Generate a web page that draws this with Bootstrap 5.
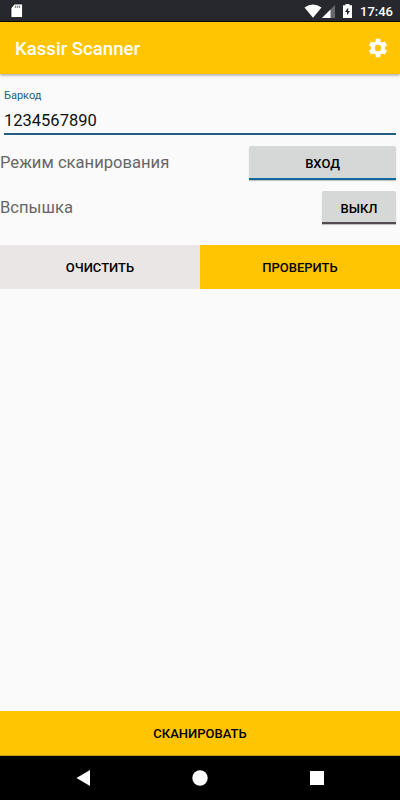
<!DOCTYPE html>
<html lang="ru">
<head>
<meta charset="utf-8">
<meta name="viewport" content="width=device-width, initial-scale=1">
<title>Kassir Scanner</title>
<link href="https://cdn.jsdelivr.net/npm/bootstrap@5.3.0/dist/css/bootstrap.min.css" rel="stylesheet">
<style>
body { font-family: Roboto, "Noto Sans", sans-serif; background: #fafafa; color: #111; line-height: 1; }
svg { display: block; flex: none; }
.screen { height: 800px; width: 400px; }
.status-bar { height: 22px; background: #27282e; border-bottom: 1px solid #08080c; padding: 1px 7px 0 9px; font-size: 13px; font-weight: 500; }
.app-bar { height: 52px; background: #ffc503; padding: 0 11px 0 15px; box-shadow: 0 1px 3px rgba(0,0,0,.4); }
.app-title { font-size: 18.6px; font-weight: 500; padding-top: 2px; }
.field-box { margin: 16px 4px 0; height: 44px; border-bottom: 2px solid #236080; }
.field-box label { font-size: 11px; color: #236080; line-height: 12px; display: block; }
.field-box input { font-size: 16.5px; line-height: 20px; color: #111; height: 20px; margin-top: 9px; }
.field-box input:focus { outline: 0; }
.option-row { height: 44.5px; padding-right: 4px; font-size: 16.6px; color: #666; }
.options { margin-top: 7px; }
.btn { --bs-btn-font-size: 13px; --bs-btn-font-weight: 500; --bs-btn-line-height: 1; --bs-btn-color: #000; --bs-btn-hover-color: #000; }
.btn-toggle { height: 33.5px; background: #d6d8d7; border: 0; border-bottom: 2px solid #514a50; border-radius: 2px 2px 0 0; box-shadow: 0 1px 1px rgba(0,0,0,.25); padding: 3px 0 0; }
.btn-mode { width: 147px; border-bottom-color: #116a9a; }
.btn-flash { width: 74px; }
.btn-flat { height: 44px; border: 0; }
.btn-clear { background: #eae6e5; }
.btn-main { background: #ffc503; }
.field-box { height: 45px; }
.options { margin-top: 5.75px; }
.actions { margin-top: 15.25px; }
.option-row span { padding-top: 1px; }
.btn-scan { height: 45px; border-bottom: 1px solid #c39b16; }
.nav-keys { height: 44px; background: #000; padding: 0 76px; }
</style>
<script defer src="https://cdn.jsdelivr.net/npm/bootstrap@5.3.0/dist/js/bootstrap.bundle.min.js"></script>
</head>
<body>
<div class="screen d-flex flex-column overflow-hidden">
  <div class="status-bar d-flex align-items-center text-white">
    <svg width="14" height="16" viewBox="0 0 14 16" class="me-auto"><path d="M5.500 1H12.500Q13.500 1 13.500 2V13.500q0 1-1 1H3Q2 14.500 2 13.500V5Z" fill="#fff" stroke="#08080c" stroke-width=".7"/><path d="M6.500 2.500v2.500M8.500 2.500v2.500M10.500 2.500v2.500" stroke="#888" stroke-width="1.300"/></svg>
    <svg width="18" height="14" viewBox="0 0 18 14"><path d="M.5 3.500Q9-2.700 17.500 3.500L9 13.800Z" fill="#fff"/></svg>
    <svg width="13" height="13" viewBox="0 0 13 13" class="me-1"><path d="M0 13 13 0V13Z" fill="#68696d"/><path d="M0 13 8.500 4.500V13Z" fill="#fff"/></svg>
    <svg width="9" height="14" viewBox="0 0 9 14" class="ms-1"><path d="M2.500 0h4v1.300H9V14H0V1.300h2.500Z" fill="#fff"/><path d="M5.200 3.500 2 8.100h2v3.200L7 6.900H5.200Z" fill="#27282e"/></svg>
    <span class="ms-2">17:46</span>
  </div>
  <header class="app-bar d-flex align-items-center justify-content-between text-white flex-shrink-0">
    <span class="app-title">Kassir Scanner</span>
    <svg width="22" height="22" viewBox="0 0 24 24" fill="#fff"><path d="M19.430 12.980c.040-.320.070-.640.070-.980s-.030-.660-.070-.980l2.110-1.650c.190-.150.240-.420.120-.640l-2-3.460c-.120-.220-.390-.300-.610-.220l-2.490 1c-.520-.400-1.080-.730-1.690-.980l-.380-2.650C14.460 2.180 14.250 2 14 2h-4c-.250 0-.460.180-.490.420l-.380 2.650c-.610.250-1.170.590-1.690.980l-2.490-1c-.230-.090-.490 0-.610.220l-2 3.460c-.130.220-.070.490.120.640l2.110 1.650c-.040.320-.070.650-.070.980s.030.660.070.980l-2.110 1.650c-.190.150-.240.420-.120.640l2 3.460c.120.220.390.300.610.220l2.490-1c.520.400 1.080.730 1.690.980l.380 2.650c.030.240.240.420.490.420h4c.250 0 .460-.180.490-.420l.380-2.650c.610-.250 1.170-.590 1.690-.980l2.490 1c.230.090.490 0 .610-.220l2-3.460c.120-.220.070-.490-.120-.640zM12 15.500a3.500 3.500 0 1 1 0-7 3.500 3.500 0 0 1 0 7z"/></svg>
  </header>
  <main class="flex-grow-1">
    <div class="field-box">
      <label for="code">Баркод</label>
      <input id="code" class="d-block w-100 border-0 bg-transparent p-0" value="1234567890">
    </div>
    <div class="options">
      <div class="option-row d-flex align-items-center justify-content-between"><span>Режим сканирования</span><button class="btn btn-toggle btn-mode">ВХОД</button></div>
      <div class="option-row d-flex align-items-center justify-content-between"><span>Вспышка</span><button class="btn btn-toggle btn-flash">ВЫКЛ</button></div>
    </div>
    <div class="actions d-flex">
      <button class="btn btn-flat btn-clear rounded-0 w-50">ОЧИСТИТЬ</button>
      <button class="btn btn-flat btn-main rounded-0 w-50">ПРОВЕРИТЬ</button>
    </div>
  </main>
  <button class="btn btn-flat btn-main btn-scan rounded-0 w-100 flex-shrink-0">СКАНИРОВАТЬ</button>
  <div class="nav-keys d-flex align-items-center justify-content-between flex-shrink-0">
    <svg width="14" height="16" viewBox="0 0 14 16"><path d="M14 0V16L.5 8Z" fill="#fff"/></svg>
    <svg width="16" height="16" viewBox="0 0 16 16"><circle cx="8" cy="8" r="7.700" fill="#fff"/></svg>
    <svg width="14" height="14" viewBox="0 0 14 14"><path d="M0 0h14v14H0Z" fill="#fff"/></svg>
  </div>
</div>
</body>
</html>
